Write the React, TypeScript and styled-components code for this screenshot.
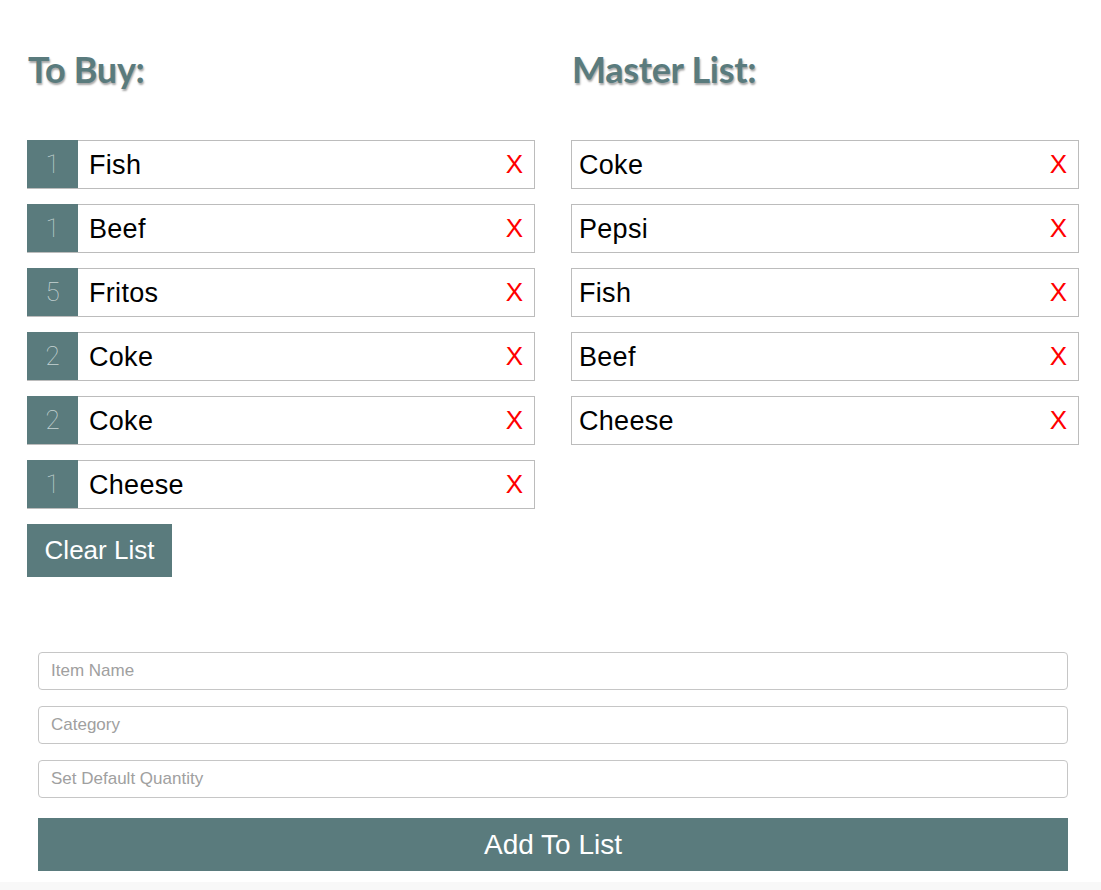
import { createGlobalStyle } from "styled-components";
import styled from "styled-components";

const toBuy = [
  { qty: 1, name: "Fish" },
  { qty: 1, name: "Beef" },
  { qty: 5, name: "Fritos" },
  { qty: 2, name: "Coke" },
  { qty: 2, name: "Coke" },
  { qty: 1, name: "Cheese" },
];
const master = ["Coke", "Pepsi", "Fish", "Beef", "Cheese"];

const GlobalStyle = createGlobalStyle`
  html, body {
    margin: 0;
    padding: 0;
    background: #f8f8f8;
  }
  * { box-sizing: border-box; }
`;

const Page = styled.div`
  background: #fff;
  height: 882px;
  padding: 0 22px 0 27px;
  font-family: "Liberation Sans", Arial, sans-serif;
`;
const Columns = styled.div`
  display: grid;
  grid-template-columns: 1fr 1fr;
  column-gap: 36px;
`;
const Column = styled.div`
  display: flex;
  flex-direction: column;
  gap: 15px;
`;
const Heading = styled.h2`
  margin: 50px 0 37px 1px;
  font-family: Lato, sans-serif;
  font-weight: 700;
  font-size: 36px;
  line-height: 38px;
  color: #5a7b7d;
  text-shadow: 1px 2px 2px rgba(0, 0, 0, 0.35);
  letter-spacing: -0.3px;
`;
const Row = styled.div`
  display: flex;
  align-items: stretch;
  height: 49px;
  border: 1px solid #bcbcbc;
  background: #fff;
`;
const Qty = styled.div`
  width: 51px;
  margin: -1px 0 0 -1px;
  height: 48px;
  background: #5a7b7d;
  color: #c5d3d3;
  font-family: Roboto, sans-serif;
  font-weight: 100;
  font-size: 26px;
  display: flex;
  align-items: center;
  justify-content: center;
`;
const Name = styled.div<{ $inset: number }>`
  flex: 1;
  display: flex;
  align-items: center;
  padding: 2px 0 0 ${(p) => p.$inset}px;
  font-size: 27px;
  letter-spacing: 0.3px;
  color: #000;
`;
const Remove = styled.button`
  border: none;
  background: none;
  color: #ff0000;
  font-family: "Liberation Sans", Arial, sans-serif;
  font-size: 26px;
  padding: 0 11px 0 0;
  cursor: pointer;
`;
const ClearButton = styled.button`
  align-self: flex-start;
  width: 145px;
  height: 53px;
  border: none;
  background: #5a7b7d;
  color: #fff;
  font-family: "Liberation Sans", Arial, sans-serif;
  font-size: 26px;
  padding: 0;
`;
const Form = styled.form`
  margin: 75px 11px 0 11px;
  display: flex;
  flex-direction: column;
  gap: 16px;
`;
const Field = styled.input`
  height: 38px;
  width: 100%;
  border: 1px solid #c6c6c6;
  border-radius: 4px;
  padding: 0 12px;
  font-family: "Liberation Sans", Arial, sans-serif;
  font-size: 17px;
  color: #333;
  &::placeholder { color: #a0a0a0; }
`;
const AddButton = styled.button`
  margin-top: 4px;
  height: 53px;
  width: 100%;
  border: none;
  background: #5a7b7d;
  color: #fff;
  font-family: "Liberation Sans", Arial, sans-serif;
  font-size: 28px;
  padding-top: 2px;
`;

export default function App() {
  return (
    <>
      <GlobalStyle />
      <Page>
        <Columns>
          <Column>
            <Heading>To Buy:</Heading>
            {toBuy.map((item, i) => (
              <Row key={i}>
                <Qty>{item.qty}</Qty>
                <Name $inset={11}>{item.name}</Name>
                <Remove>X</Remove>
              </Row>
            ))}
            <ClearButton>Clear List</ClearButton>
          </Column>
          <Column>
            <Heading>Master List:</Heading>
            {master.map((name, i) => (
              <Row key={i}>
                <Name $inset={7}>{name}</Name>
                <Remove>X</Remove>
              </Row>
            ))}
          </Column>
        </Columns>
        <Form onSubmit={(e) => e.preventDefault()}>
          <Field placeholder="Item Name" />
          <Field placeholder="Category" />
          <Field placeholder="Set Default Quantity" />
          <AddButton type="submit">Add To List</AddButton>
        </Form>
      </Page>
    </>
  );
}
